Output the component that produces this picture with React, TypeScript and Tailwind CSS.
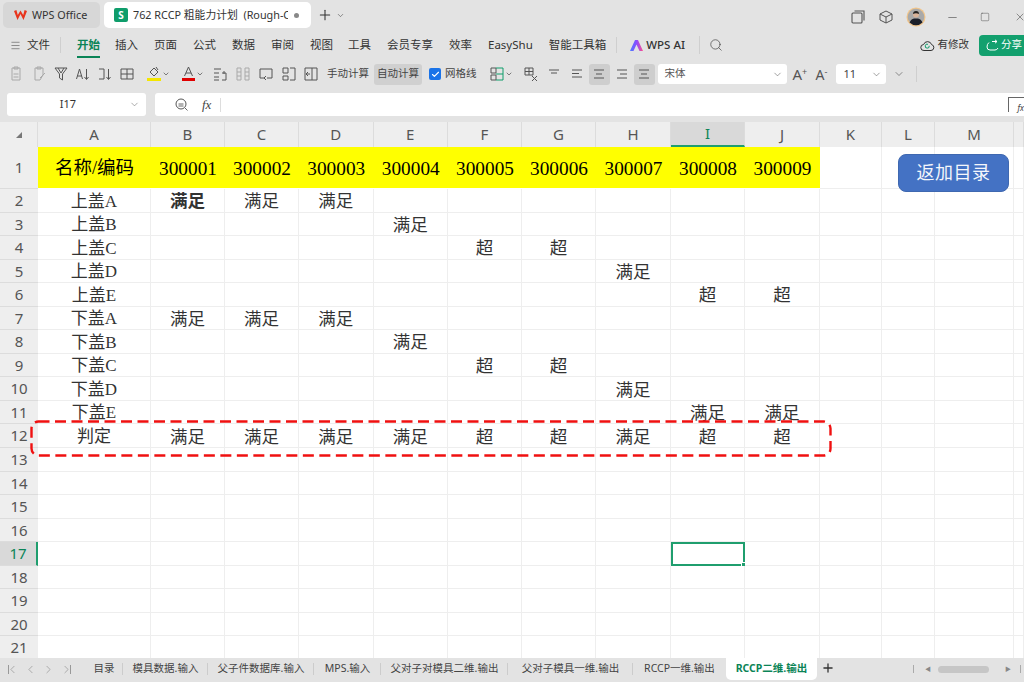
import React from "react";
import { ChevronDown, ChevronLeft, ChevronRight, Menu, Plus, Search, Minus, Square, X, Check } from "lucide-react";

const ui = "font-['Noto_Sans','Noto_Sans_CJK_SC',sans-serif]";
const cellFont = "font-['Liberation_Serif','Noto_Sans_CJK_SC',serif]";

const columns = ["A", "B", "C", "D", "E", "F", "G", "H", "I", "J", "K", "L", "M", ""];
const headers = ["名称/编码", "300001", "300002", "300003", "300004", "300005", "300006", "300007", "300008", "300009"];

const M = "满足";
const C = "超";
const rows: string[][] = [
  ["上盖A", M, M, M],
  ["上盖B", "", "", "", M],
  ["上盖C", "", "", "", "", C, C],
  ["上盖D", "", "", "", "", "", "", M],
  ["上盖E", "", "", "", "", "", "", "", C, C],
  ["下盖A", M, M, M],
  ["下盖B", "", "", "", M],
  ["下盖C", "", "", "", "", C, C],
  ["下盖D", "", "", "", "", "", "", M],
  ["下盖E", "", "", "", "", "", "", "", M, M],
  ["判定", M, M, M, M, C, C, M, C, C],
];

const ribbonTabs = [
  ["插入", "ml-[15px]"],
  ["页面", "ml-[16px]"],
  ["公式", "ml-[16px]"],
  ["数据", "ml-[16px]"],
  ["审阅", "ml-[16px]"],
  ["视图", "ml-[16px]"],
  ["工具", "ml-[15px]"],
  ["会员专享", "ml-[16px]"],
  ["效率", "ml-[16px]"],
  ["EasyShu", "ml-[16px]"],
  ["智能工具箱", "ml-[16px]"],
];

const sheetTabs = [
  ["目录", "w-[38px]"],
  ["模具数据.输入", "w-[85px]"],
  ["父子件数据库.输入", "w-[106px]"],
  ["MPS.输入", "w-[67px]"],
  ["父对子对模具二维.输出", "w-[127px]"],
  ["父对子模具一维.输出", "w-[125px]"],
  ["RCCP一维.输出", "w-[93px]"],
];

// small line icon wrapper for the toolbar
const Ico = ({ d, w = 23, faded = false }: { d: string; w?: number; faded?: boolean }) => (
  <div className="flex h-[24px] shrink-0 items-center justify-center" style={{ width: w }}>
    <svg width="16" height="16" viewBox="0 0 16 16" fill="none" stroke={faded ? "#a9a9a9" : "#555"} strokeWidth="1">
      <path d={d} />
    </svg>
  </div>
);

const Sep = ({ className = "" }: { className?: string }) => <div className={`h-[16px] w-px shrink-0 bg-[#cfcfcf] ${className}`} />;

const AlignBtn = ({ d, active = false }: { d: string; active?: boolean }) => (
  <div className={`flex h-[21px] w-[21px] shrink-0 items-center justify-center rounded-[3px] ${active ? "bg-[#cecece]" : ""}`}>
    <svg width="14" height="14" viewBox="0 0 14 14" stroke="#555" strokeWidth="1" fill="none">
      <path d={d} />
    </svg>
  </div>
);

const TitleBar = () => (
  <div className="flex h-[32px] items-start pt-[2px] pl-[3px]">
    <div className="flex h-[26px] w-[97px] items-center rounded-[5px] bg-[#d7d7d7] pl-[10px] text-[10.8px] text-[#333]">
      <svg width="15" height="12" viewBox="0 0 15 12" className="mr-[4px]">
        <path d="M1 2 L4.5 11 L7.5 5 L10.5 11 L14 2 L11.6 1 L10.2 6 L7.5 1.5 L4.8 6 L3.4 1 Z" fill="#e8341c" />
      </svg>
      WPS Office
    </div>
    <div className="ml-[4px] flex h-[26px] w-[207px] items-center rounded-[5px] bg-white pl-[10px] text-[10.8px] text-[#333]">
      <div className="mr-[5px] flex h-[14px] w-[14px] items-center justify-center rounded-[2px] bg-[#0f9d6b] text-[10px] font-bold text-white">S</div>
      <span className="w-[155px] overflow-hidden whitespace-pre">762 RCCP 粗能力计划  (Rough-C</span>
      <div className="ml-[6px] h-[5px] w-[5px] rounded-full bg-[#888]" />
    </div>
    <Plus className="mt-[5px] ml-[6px]" size={16} strokeWidth={1.6} color="#333" />
    <ChevronDown className="mt-[9px] ml-[3px]" size={9} strokeWidth={1.5} color="#444" />
    <div className="ml-auto flex items-center pt-[5px]">
      <svg width="14" height="14" viewBox="0 0 14 14" fill="none" stroke="#555" strokeWidth="1.1">
        <rect x="1" y="3" width="10" height="10" rx="1" />
        <path d="M3.5 1 H13 V10.5" />
      </svg>
      <svg className="ml-[14px]" width="14" height="14" viewBox="0 0 14 14" fill="none" stroke="#555" strokeWidth="1">
        <path d="M7 1 L13 4 V10 L7 13 L1 10 V4 Z M1 4 L7 7 L13 4 M7 7 V13" />
      </svg>
      <svg className="ml-[13px]" width="20" height="20" viewBox="0 0 20 20">
        <circle cx="10" cy="10" r="9.5" fill="#f0c48a" />
        <circle cx="10" cy="10" r="8.3" fill="#a9a9a9" />
        <path d="M3.5 15.5 Q5 12 8 11.5 H12 Q15 12 16.5 15.5 Q13.5 18.3 10 18.3 Q6.5 18.3 3.5 15.5 Z" fill="#1b1f2a" />
        <circle cx="10" cy="7.6" r="3" fill="#d8b39a" />
        <path d="M7 7 Q7 4 10 4 Q13 4 13 7 Q10 5.5 7 7 Z" fill="#222" />
      </svg>
      <Minus className="ml-[20px]" size={13} strokeWidth={1.1} color="#444" />
      <Square className="ml-[21px]" size={10} strokeWidth={1.1} color="#444" />
      <X className="ml-[24px] mr-[-2px]" size={12} strokeWidth={1.1} color="#444" />
    </div>
  </div>
);

const RibbonTabs = () => (
  <div className="flex h-[26px] items-center whitespace-nowrap pl-[10px] text-[11.5px] text-[#333]">
    <Menu size={11} strokeWidth={1.2} color="#444" />
    <span className="ml-[6px]">文件</span>
    <Sep className="ml-[10px]" />
    <div className="relative ml-[16px] font-bold text-[#0b8457]">
      开始
      <div className="absolute right-0 bottom-[-4px] left-0 h-[2px] bg-[#0b8457]" />
    </div>
    {ribbonTabs.map(([t, m]) => (
      <span key={t} className={m}>
        {t}
      </span>
    ))}
    <Sep className="ml-[10px]" />
    <svg className="ml-[13px]" width="13" height="11" viewBox="0 0 13 11">
      <defs>
        <linearGradient id="ai" x1="0" y1="0" x2="1" y2="0">
          <stop offset="0" stopColor="#4b7bff" />
          <stop offset="0.5" stopColor="#8a4dff" />
          <stop offset="1" stopColor="#ff4f8b" />
        </linearGradient>
      </defs>
      <path d="M0 11 L5 0 H8 L13 11 H9.5 L6.5 4.5 L3.5 11 Z" fill="url(#ai)" />
    </svg>
    <span className="ml-[3px] font-medium">WPS AI</span>
    <Sep className="ml-[14px] h-[18px]" />
    <Search className="ml-[9px]" size={14} strokeWidth={1.2} color="#444" />
    <div className="ml-auto flex items-center">
      <svg width="15" height="13" viewBox="0 0 15 13" fill="none" stroke="#333" strokeWidth="1">
        <path d="M4 11.5 H11 A3 3 0 0 0 11.6 5.6 A4.2 4.2 0 0 0 3.6 5.5 A3 3 0 0 0 4 11.5 Z" />
        <path d="M9.2 6.8 A2 2 0 1 1 8 5.3" stroke="#0f9d6b" />
      </svg>
      <span className="ml-[3px] text-[10.5px]">有修改</span>
      <div className="ml-[10px] flex h-[21px] w-[45px] items-center rounded-l-[4px] bg-[#13a06e] pl-[7px] text-[10.5px] text-white">
        <svg width="13" height="12" viewBox="0 0 13 12" fill="none" stroke="#fff" strokeWidth="1">
          <path d="M6 2.5 H11 M9 0.8 L11 2.5 L9 4.2 M3 3.5 Q1 5 1 8 Q1 11 4 11 H9 Q11 11 12 9" />
        </svg>
        <span className="ml-[2px]">分享</span>
      </div>
    </div>
  </div>
);

const Toolbar = () => (
  <div className="flex h-[32px] items-center whitespace-nowrap pl-[4px] text-[10.5px] text-[#444]">
    <Ico faded d="M4 2 H12 V14 H4 Z M6 1 H10 V3 H6 Z M5.5 8 H10.5 M5.5 11 H10.5" />
    <Ico faded d="M4 2 H12 V9 L9 14 H4 Z M6 1 H10 V3 H6 Z M14 7 L9 12" />
    <Ico d="M2 2 H14 L9.5 8 V14 L6.5 12 V8 Z M5 2 L8 7 L11 2" w={22} />
    <Ico d="M1.5 13 L4.5 3 L7.5 13 M2.5 10 H6.5 M11.5 3 V13 M9.5 11 L11.5 13.5 L13.5 11" w={22} />
    <Ico d="M2 3 H7 V13 H2 M11.5 3 V13 M9.5 11 L11.5 13.5 L13.5 11" w={22} />
    <Ico d="M2 3 H14 V13 H2 Z M8 3 V13 M2 8 H14" w={22} />
    <div className="ml-[8px] flex w-[28px] shrink-0 items-center">
      <svg width="16" height="18" viewBox="0 0 16 18" fill="none" stroke="#555">
        <path d="M4 7 L8 3 L12 7 L8 11 Z M10 2 L12 5" />
        <rect x="1" y="13" width="14" height="3" fill="#f4e600" stroke="none" />
      </svg>
      <ChevronDown size={8} strokeWidth={2} color="#444" />
    </div>
    <div className="ml-[7px] flex w-[27px] shrink-0 items-center">
      <svg width="15" height="18" viewBox="0 0 15 18" fill="none" stroke="#555">
        <path d="M3.5 11 L7.5 2 L11.5 11 M5 8 H10" />
        <rect x="1" y="13" width="13" height="3" fill="#e00000" stroke="none" />
      </svg>
      <ChevronDown size={8} strokeWidth={2} color="#444" />
    </div>
    <Ico d="M2 3 H9 M2 7 H7 M2 11 H7 M2 14 H7 M10 7 H14 V14 H10 M12 5 V8" />
    <Ico faded d="M2 2 H6 V14 H2 Z M10 2 H14 V14 H10 Z M2 6 H6 M2 10 H6 M10 6 H14 M10 10 H14" />
    <Ico d="M2 3 H14 V12 H9 M2 3 V12 H6 M8 10 L6 12 L8 14" />
    <Ico d="M2 2 H7 V7 H2 Z M2 10 H7 V14 H2 Z M9 2 H14 V14 H9" />
    <Ico d="M2 2 H14 V14 H2 Z M9 2 V14 M7 8 H3 M5 6 L3 8 L5 10" w={22} />
    <span className="ml-[5px]">手动计算</span>
    <div className="ml-[5px] flex h-[21px] w-[48px] items-center justify-center rounded-[3px] bg-[#d0d0d0]">自动计算</div>
    <div className="ml-[7px] flex h-[12px] w-[12px] items-center justify-center rounded-[2px] bg-[#1a73e8]">
      <Check size={9} strokeWidth={3} color="#fff" />
    </div>
    <span className="ml-[4px]">网格线</span>
    <div className="ml-[12px] flex w-[28px] shrink-0 items-center">
      <svg width="16" height="16" viewBox="0 0 16 16" fill="none" stroke="#555">
        <path d="M2 2 H7 V7 H2 Z M2 9 H7 V14 H2 Z" />
        <path d="M7 2 H14 V14 H7 M7 8 H14" stroke="#0f9d6b" />
      </svg>
      <ChevronDown size={8} strokeWidth={2} color="#444" />
    </div>
    <div className="ml-[3px]">
      <Ico d="M3 2 H11 V9 H3 Z M3 5.5 H11 M7 2 V9 M10 10 L15 15 M15 10 L10 15" w={20} />
    </div>
    <div className="ml-[4px] flex gap-[1.5px]">
      <AlignBtn d="M2 3 H12 M4 6 H10" />
      <AlignBtn d="M2 3 H12 M2 6.5 H9 M2 10 H12" />
      <AlignBtn active d="M2 3 H12 M4 7 H10 M2 11 H12" />
      <AlignBtn d="M2 3 H12 M5 7 H12 M2 11 H12" />
      <AlignBtn active d="M2 3 H12 M4 7 H10 M2 11 H12" />
    </div>
    <div className="ml-[3px] flex h-[20px] w-[129px] shrink-0 items-center justify-between rounded-[3px] bg-white pr-[4px] pl-[7px] text-[10.5px] text-[#555]">
      宋体
      <ChevronDown size={11} strokeWidth={1.2} color="#555" />
    </div>
    <span className="ml-[6px] w-[20px] text-[15px] text-[#555]">
      A<sup className="text-[9px]">+</sup>
    </span>
    <span className="ml-[3px] w-[20px] text-[14px] text-[#555]">
      A<sup className="text-[9px]">-</sup>
    </span>
    <div className="ml-[0px] flex h-[20px] w-[50px] shrink-0 items-center justify-between rounded-[3px] bg-white pr-[4px] pl-[8px] text-[11px] text-[#444]">
      11
      <ChevronDown size={11} strokeWidth={1.2} color="#555" />
    </div>
    <ChevronDown className="ml-[7px]" size={12} strokeWidth={1.3} color="#555" />
    <Sep className="ml-[11px]" />
  </div>
);

const FormulaBar = () => (
  <div className="flex h-[32px] gap-[9px] pt-[3px] pl-[7px]">
    <div className="flex h-[23px] w-[139px] items-center rounded-[3px] bg-white text-[11px] text-[#333]">
      <span className="w-[122px] text-center">I17</span>
      <ChevronDown size={11} strokeWidth={1.2} color="#666" />
    </div>
    <div className="flex h-[23px] flex-1 items-center rounded-l-[3px] bg-white pl-[20px]">
      <svg width="13" height="13" viewBox="0 0 13 13" fill="none" stroke="#555">
        <circle cx="6" cy="6" r="5" />
        <path d="M3.5 6 H8.5 M3.5 8 H8.5 M10 10 L12.5 12.5" strokeWidth="0.9" />
      </svg>
      <span className={`ml-[14px] text-[13px] italic text-[#444] ${cellFont}`}>fx</span>
      <div className="ml-[9px] h-[14px] w-px bg-[#ddd]" />
      <div className="relative ml-auto flex h-[15px] w-[16px] items-end justify-end border-t border-l border-[#666] text-[8px] leading-none text-[#444] italic">fx</div>
    </div>
  </div>
);

const Sheet = () => (
  <div className={`relative grid h-[536px] grid-cols-[38px_113px_74px_74px_74.5px_74.5px_74px_74px_75px_74px_75px_62px_53px_79px_10px] grid-rows-[25px_42px_repeat(20,23.55px)] overflow-hidden bg-white ${cellFont}`}>
    {/* column headers */}
    <div className="flex items-center justify-center border-r border-[#ddd] bg-[#eeeeee]">
      <svg width="8" height="8" viewBox="0 0 8 8">
        <path d="M7 1 V7 H1 Z" fill="#777" />
      </svg>
    </div>
    {columns.map((c, i) => (
      <div
        key={i}
        className={`flex items-center justify-center border-r border-[#dcdcdc] text-[15px] ${ui} ${
          c === "I" ? "border-b-2 border-b-[#1f9e6e] bg-[#d9d9d9] text-[#0b8457]" : "bg-[#eeeeee] text-[#555]"
        }`}
      >
        {c}
      </div>
    ))}

    {/* row 1 */}
    <div className={`flex items-center justify-center border-b border-[#dcdcdc] bg-[#eeeeee] text-[15px] text-[#555] ${ui}`}>1</div>
    {headers.map((h, i) => (
      <div key={h} className={`mb-px flex items-center justify-center bg-[#ffff00] pt-[3px] whitespace-nowrap text-black ${i === 0 ? "text-[18.5px]" : "text-[19.3px]"}`}>
        {h}
      </div>
    ))}
    {columns.slice(10).map((_, i) => (
      <div key={i} className="border-r border-b border-[#eeeeee]" />
    ))}

    {/* body rows */}
    {Array.from({ length: 20 }).map((_, r) => {
      const rowNo = r + 2;
      const vals = rows[r] || [];
      return (
        <React.Fragment key={rowNo}>
          <div
            className={`flex items-center justify-center border-b border-[#dcdcdc] text-[15px] ${ui} ${
              rowNo === 17 ? "border-r-2 border-r-[#1f9e6e] bg-[#d9d9d9] text-[#0b8457]" : "bg-[#eeeeee] text-[#555]"
            }`}
          >
            {rowNo}
          </div>
          {columns.map((c, i) => {
            const v = vals[i] || "";
            const selected = rowNo === 17 && c === "I";
            return (
              <div
                key={i}
                className={`relative flex items-center justify-center pt-[2px] whitespace-nowrap text-[#333] ${
                  v === M || v === C ? "text-[17.5px]" : "text-[17px]"
                } ${selected ? "border-2 border-[#1f9e6e]" : "border-r border-b border-[#eeeeee]"} ${
                  rowNo === 2 && c === "B" ? "font-bold text-[#111]" : ""
                }`}
              >
                {v}
                {selected && <div className="absolute right-[-3px] bottom-[-3px] h-[5px] w-[5px] border border-white bg-[#1f9e6e]" />}
              </div>
            );
          })}
        </React.Fragment>
      );
    })}

    {/* macro button floating over the sheet */}
    <div className="absolute top-[32px] left-[898px] flex h-[38px] w-[111px] items-center justify-center rounded-[8px] border border-[#3f68b0] bg-[#4472c4] text-[18px] tracking-[0.5px] text-[#f4f6fb]">
      返加目录
    </div>

    {/* red dashed annotation */}
    <svg className="absolute top-[298px] left-[30px]" width="802" height="37" viewBox="0 0 802 37" fill="none">
      <rect x="1.5" y="1.5" width="799" height="34" rx="7" stroke="#f01010" strokeWidth="2.4" strokeDasharray="11 5.5" />
    </svg>
  </div>
);

const TabBar = () => (
  <div className="flex h-[24px] items-start whitespace-nowrap bg-[#e3e3e3] text-[10.5px] text-[#444]">
    <div className="flex h-[22px] w-[85px] shrink-0 items-center gap-[5px] pl-[6px] text-[#999]">
      <div className="relative">
        <div className="absolute top-[2px] left-[2px] h-[9px] w-px bg-[#999]" />
        <ChevronLeft size={13} strokeWidth={1.4} />
      </div>
      <ChevronLeft size={13} strokeWidth={1.4} />
      <ChevronRight size={13} strokeWidth={1.4} />
      <div className="relative">
        <div className="absolute top-[2px] right-[2px] h-[9px] w-px bg-[#999]" />
        <ChevronRight size={13} strokeWidth={1.4} />
      </div>
    </div>
    {sheetTabs.map(([t, w], i) => (
      <div key={t} className={`flex h-[22px] shrink-0 items-center justify-center ${w} ${i < sheetTabs.length - 1 ? "relative after:absolute after:top-[5px] after:right-0 after:h-[12px] after:w-px after:bg-[#ccc]" : ""}`}>
        {t}
      </div>
    ))}
    <div className="flex h-[22px] w-[91px] shrink-0 items-center justify-center rounded-b-[5px] bg-white font-bold text-[#0b8457]">RCCP二维.输出</div>
    <Plus className="mt-[3px] ml-[4px]" size={14} strokeWidth={2.2} color="#333" />
    <div className="ml-[78px] flex h-[22px] flex-1 items-center text-[#888]">
      <div className="h-[8px] w-px bg-[#aaa]" />
      <span className="ml-[11px] text-[6px]">◀</span>
      <div className="ml-[7px] h-[7px] w-[51px] rounded-full bg-[#c6c6c6]" />
      <span className="ml-[16px] text-[6px]">▶</span>
      <div className="ml-[9px] h-[8px] w-px bg-[#aaa]" />
    </div>
  </div>
);

const App = () => {
  return (
    <div className={`h-[682px] w-[1024px] overflow-hidden bg-[#e3e3e3] ${ui}`}>
      <TitleBar />
      <RibbonTabs />
      <Toolbar />
      <FormulaBar />
      <Sheet />
      <TabBar />
    </div>
  );
};

export default App;
